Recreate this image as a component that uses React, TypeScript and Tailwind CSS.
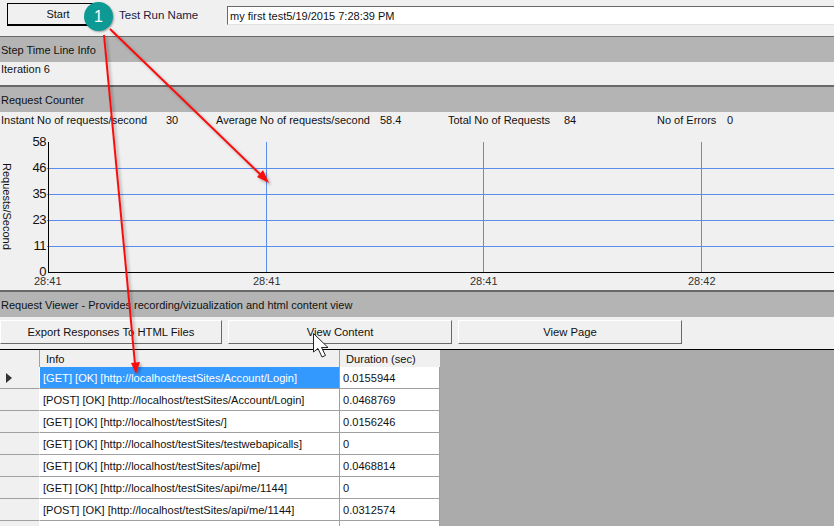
import React from 'react';

const STATS = [
  { label: 'Instant No of requests/second', value: '30', labelW: 'w-[165px]', valueW: 'w-[50px]' },
  { label: 'Average No of requests/second', value: '58.4', labelW: 'w-[164px]', valueW: 'w-[68px]' },
  { label: 'Total No of Requests', value: '84', labelW: 'w-[116px]', valueW: 'w-[93px]' },
  { label: 'No of Errors', value: '0', labelW: 'w-[70px]', valueW: 'w-[30px]' },
];

const ROWS = [
  { info: '[GET] [OK] [http://localhost/testSites/Account/Login]', duration: '0.0155944' },
  { info: '[POST] [OK] [http://localhost/testSites/Account/Login]', duration: '0.0468769' },
  { info: '[GET] [OK] [http://localhost/testSites/]', duration: '0.0156246' },
  { info: '[GET] [OK] [http://localhost/testSites/testwebapicalls]', duration: '0' },
  { info: '[GET] [OK] [http://localhost/testSites/api/me]', duration: '0.0468814' },
  { info: '[GET] [OK] [http://localhost/testSites/api/me/1144]', duration: '0' },
  { info: '[POST] [OK] [http://localhost/testSites/api/me/1144]', duration: '0.0312574' },
  { info: '', duration: '' },
];

const Y_TICKS = ['58', '46', '35', '23', '11', '0'];

const SectionHeader = ({ title, thick }: { title: string; thick?: boolean }) => (
  <div
    className={`bg-[#b4b4b4] border-t-[#696969] pl-px pt-[5px] text-[#111] leading-[16px] ${thick ? 'h-[27px] border-t-2' : 'h-[26px] border-t'}`}
  >
    {title}
  </div>
);

const WinButton = ({ label, className }: { label: string; className: string }) => (
  <button
    className={`h-[24px] bg-[#f0f0f0] border border-t-white border-l-white border-r-[#696969] border-b-[#696969] text-center text-[11.25px] text-[#111] ${className}`}
  >
    {label}
  </button>
);

const Chart = () => (
  <div className="flex h-[163px]">
    <div className="w-[14px] pt-[36px] pl-px">
      <div className="[writing-mode:vertical-rl] leading-[12px] text-[#111] whitespace-nowrap">Requests/Second</div>
    </div>
    <div className="relative flex-1">
      {Y_TICKS.map((t, i) => (
        <span key={t} className="absolute right-[788px] leading-[14px] text-[#111] text-[13px] tracking-[-0.5px]" style={{ top: 8 + i * 26 }}>
          {t}
        </span>
      ))}
      <svg className="absolute left-[33px] top-[15px]" width="787" height="132">
        {[26, 52, 78, 104].map(y => (
          <line key={y} x1="0" x2="787" y1={y + 0.5} y2={y + 0.5} stroke="#5b8def" />
        ))}
        {[219, 436, 654].map(x => (
          <line key={x} x1={x + 0.5} x2={x + 0.5} y1="0" y2="130" stroke="#5b8def" />
        ))}
        <line x1="1.5" x2="1.5" y1="0" y2="131" stroke="#000" />
        <line x1="1" x2="787" y1="130.5" y2="130.5" stroke="#000" />
      </svg>
      {[47, 266, 483, 701].map((x, i) => (
        <span key={i} className="absolute top-[147px] leading-[14px] text-[#333]" style={{ left: x - 14 - 13 }}>
          {i === 3 ? '28:42' : '28:41'}
        </span>
      ))}
    </div>
  </div>
);

const Overlay = () => (
  <>
    <svg className="absolute left-0 top-0 pointer-events-none" width="834" height="526">
      <defs>
        <filter id="shadow" x="-20%" y="-20%" width="140%" height="140%">
          <feDropShadow dx="2" dy="2" stdDeviation="1.5" floodColor="#000" floodOpacity="0.3" />
        </filter>
      </defs>
      <g filter="url(#shadow)">
        <line x1="110" y1="29" x2="262" y2="176" stroke="#f81010" strokeWidth="2" />
        <polygon points="269,183 257,177 263,170" fill="#f81010" />
        <line x1="104" y1="35" x2="135" y2="364" stroke="#f81010" strokeWidth="2" />
        <polygon points="136,374 131,363 140,362" fill="#f81010" />
      </g>
      <path
        d="M313.5 333.5 L313.5 352 L318 348.5 L322 357 L325.5 355.5 L321.5 347.5 L328 347.5 Z"
        fill="#fff"
        stroke="#222"
        strokeWidth="1"
      />
    </svg>
    <div className="absolute left-[84px] top-[2px] w-[29px] h-[29px] rounded-full bg-[#0e9a94] flex items-center justify-center text-white text-[16px] shadow-[1px_1px_2px_rgba(0,0,0,0.35)]">
      1
    </div>
  </>
);

export default function App() {
  return (
    <div className="relative w-[834px] h-[526px] overflow-hidden bg-[#f0f0f0] text-[11px] font-['Liberation_Sans',Arial,sans-serif]">
      <div className="h-[36px] flex items-start">
        <button className="ml-[7px] mt-[3px] w-[90px] h-[23px] bg-[#f0f0f0] border border-black border-b-2 text-center text-[#111] pl-[12px]">
          Start
        </button>
        <span className="ml-[22px] w-[108px] mt-[7px] leading-[16px] text-[11.5px] text-[#1a1a40]">Test Run Name</span>
        <input
          readOnly
          value="my first test5/19/2015 7:28:39 PM"
          className="mt-[6px] flex-1 h-[19px] bg-white border border-t-[#696969] border-l-[#696969] border-r-0 border-b-[#e3e3e3] pl-[2px] text-[#111] outline-none"
        />
      </div>

      <SectionHeader title="Step Time Line Info" />
      <div className="h-[23px] pl-px leading-[14px] text-[#111]">Iteration 6</div>

      <SectionHeader title="Request Counter" thick />
      <div className="h-[14px] flex pl-px mt-[1px] leading-[14px] text-[#111]">
        {STATS.map(s => (
          <React.Fragment key={s.label}>
            <span className={`${s.labelW} whitespace-nowrap`}>{s.label}</span>
            <span className={s.valueW}>{s.value}</span>
          </React.Fragment>
        ))}
      </div>

      <Chart />

      <SectionHeader title="Request Viewer - Provides recording/vizualization and html content view" thick />
      <div className="h-[33px] flex gap-[6px] items-start pt-[3px] border-b border-b-black">
        <WinButton label="Export Responses To HTML Files" className="w-[222px]" />
        <WinButton label="View Content" className="w-[224px]" />
        <WinButton label="View Page" className="w-[224px]" />
      </div>

      <div className="flex h-[176px] bg-[#ababab]">
        <div className="w-[440px] shrink-0 text-[11.1px]">
          <div className="h-[17px] flex bg-[#f0f0f0] leading-[19px] text-[#111]">
            <div className="w-[40px] border-r border-r-[#a0a0a0]" />
            <div className="w-[300px] pl-[6px] border-r border-r-[#a0a0a0]">Info</div>
            <div className="flex-1 pl-[6px]">Duration (sec)</div>
          </div>
          {ROWS.map((r, i) => (
            <div key={i} className="h-[22px] flex leading-[23px]">
              <div className="w-[40px] bg-[#f0f0f0] border-r border-b border-r-white border-b-[#a0a0a0] flex items-center pl-[6px]">
                {i === 0 && (
                  <svg width="6" height="10" viewBox="0 0 6 10">
                    <path d="M0 0 L6 5 L0 10 Z" fill="#333" />
                  </svg>
                )}
              </div>
              <div
                className={`w-[300px] pl-[3px] border-r border-b border-[#a0a0a0] whitespace-nowrap ${i === 0 ? 'bg-[#3399ff] text-white' : 'bg-white text-[#111]'}`}
              >
                {r.info}
              </div>
              <div className="w-[100px] pl-[3px] bg-white border-r border-b border-[#a0a0a0] text-[#111]">{r.duration}</div>
            </div>
          ))}
        </div>
      </div>

      <Overlay />
    </div>
  );
}
